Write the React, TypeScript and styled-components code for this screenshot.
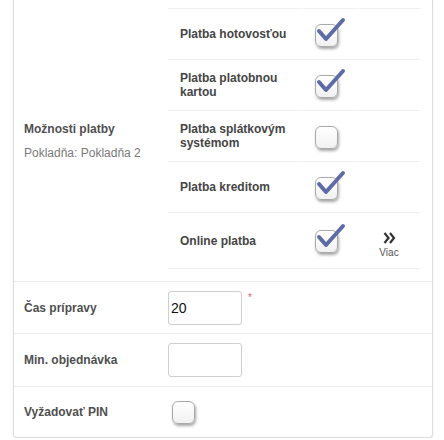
import React from 'react'
import styled, { createGlobalStyle } from 'styled-components'

const GlobalStyle = createGlobalStyle`
    body {
        margin: 0;
        background: #fff;
        font-family: "Liberation Sans", Arial, sans-serif;
    }
`

interface IPaymentOption {
    name: string
    checked: boolean
    more?: boolean
    height: number
}

const paymentOptions: IPaymentOption[] = [
    { name: 'Platba hotovosťou', checked: true, height: 51 },
    { name: 'Platba platobnou kartou', checked: true, height: 51 },
    { name: 'Platba splátkovým systémom', checked: false, height: 51 },
    { name: 'Platba kreditom', checked: true, height: 51 },
    { name: 'Online platba', checked: true, more: true, height: 57 },
]

const CheckBox = ({ checked }: { checked: boolean }) => (
    <Box>
        {checked && (
            <Tick width="30" height="30" viewBox="0 0 30 30">
                <polyline points="4,12 11,20 28,1" />
            </Tick>
        )}
    </Box>
)

const App = () => {
    return (
        <>
            <GlobalStyle />
            <Card>
                <FormRow>
                    <LabelCell>
                        <LabelBlock>
                            <Label>Možnosti platby</Label>
                            <SubLabel>Pokladňa: Pokladňa 2</SubLabel>
                        </LabelBlock>
                    </LabelCell>
                    <OptionTable>
                        {paymentOptions.map((option, i) => (
                            <OptionRow key={i} $height={option.height} $last={i === paymentOptions.length - 1}>
                                <OptionName>{option.name}</OptionName>
                                <OptionCheck>
                                    <CheckBox checked={option.checked} />
                                </OptionCheck>
                                <OptionMore>
                                    {option.more && (
                                        <MoreLink>
                                            <svg width="13" height="12" viewBox="0 0 13 12">
                                                <polyline points="1.5,1 5.5,6 1.5,11" fill="none" stroke="#333" strokeWidth="2.2" />
                                                <polyline points="7,1 11,6 7,11" fill="none" stroke="#333" strokeWidth="2.2" />
                                            </svg>
                                            <MoreText>Viac</MoreText>
                                        </MoreLink>
                                    )}
                                </OptionMore>
                            </OptionRow>
                        ))}
                    </OptionTable>
                </FormRow>
                <FormRow $height={51}>
                    <LabelCell>
                        <Label>Čas prípravy</Label>
                    </LabelCell>
                    <FieldCell>
                        <TextInput defaultValue="20" />
                        <Required>*</Required>
                    </FieldCell>
                </FormRow>
                <FormRow $height={52}>
                    <LabelCell>
                        <Label>Min. objednávka</Label>
                    </LabelCell>
                    <FieldCell>
                        <TextInput />
                    </FieldCell>
                </FormRow>
                <FormRow $height={50}>
                    <LabelCell>
                        <Label>Vyžadovať PIN</Label>
                    </LabelCell>
                    <FieldCell>
                        <PinCheck>
                            <CheckBox checked={false} />
                        </PinCheck>
                    </FieldCell>
                </FormRow>
            </Card>
        </>
    )
}

const Card = styled.div`
    margin: 0 11px 0 13px;
    border: 1px solid #dcdcdc;
    border-top: none;
    border-radius: 0 0 4px 4px;
    box-shadow: 0 1px 2px rgba(0, 0, 0, 0.08);
    background: #fff;
`

const FormRow = styled.div<{ $height?: number }>`
    display: grid;
    grid-template-columns: 154px 1fr;
    height: ${p => (p.$height ? `${p.$height}px` : 'auto')};
    border-top: 1px solid #ececec;

    &:first-child {
        border-top: none;
    }
`

const LabelCell = styled.div`
    display: flex;
    align-items: center;
    padding-left: 10px;
`

const LabelBlock = styled.div`
    display: flex;
    flex-direction: column;
    gap: 10px;
`

const Label = styled.div`
    font-size: 12px;
    font-weight: bold;
    color: #4f4f4f;
`

const SubLabel = styled.div`
    font-size: 12px;
    color: #7a7a7a;
`

const OptionTable = styled.div`
    margin: 8px 12px 12px 0;
`

const OptionRow = styled.div<{ $height: number; $last: boolean }>`
    display: grid;
    grid-template-columns: 133px 55px 1fr;
    column-gap: 1px;
    height: ${p => p.$height}px;

    & > div {
        border-top: 1px solid #efefef;
        border-bottom: ${p => (p.$last ? '1px solid #efefef' : 'none')};
    }
`

const OptionName = styled.div`
    display: flex;
    align-items: center;
    padding: 0 10px 0 12px;
    font-size: 12px;
    font-weight: bold;
    line-height: 14px;
    color: #454545;
`

const OptionCheck = styled.div`
    display: flex;
    align-items: center;
    padding-left: 13px;
    padding-top: 2px;
`

const OptionMore = styled.div`
    display: flex;
    justify-content: center;
    align-items: center;
    padding-top: 8px;
`

const MoreLink = styled.div`
    display: flex;
    flex-direction: column;
    align-items: center;
    gap: 3px;
    cursor: pointer;
`

const MoreText = styled.span`
    font-size: 10px;
    color: #555;
`

const Box = styled.span`
    position: relative;
    display: inline-block;
    width: 21px;
    height: 21px;
    border: 1px solid #a9a9a9;
    border-radius: 6px;
    background: linear-gradient(#ffffff, #f1f1f1);
    box-shadow: 1px 2px 3px rgba(0, 0, 0, 0.35);
`

const Tick = styled.svg`
    position: absolute;
    left: -1px;
    top: -6px;
    overflow: visible;

    polyline {
        fill: none;
        stroke: #5d6ba6;
        stroke-width: 4;
        stroke-linecap: round;
        stroke-linejoin: round;
    }
`

const FieldCell = styled.div`
    display: flex;
    align-items: center;
    gap: 6px;
`

const TextInput = styled.input`
    box-sizing: border-box;
    width: 74px;
    height: 34px;
    padding: 0 2px;
    border: 1px solid #cfcfcf;
    border-radius: 3px;
    font-family: "Liberation Sans", Arial, sans-serif;
    font-size: 14px;
    color: #111;
    outline: none;
`

const Required = styled.span`
    align-self: flex-start;
    margin-top: 10px;
    font-size: 10px;
    color: #e06666;
`

const PinCheck = styled.div`
    padding-left: 4px;
    display: flex;
`

export default App
